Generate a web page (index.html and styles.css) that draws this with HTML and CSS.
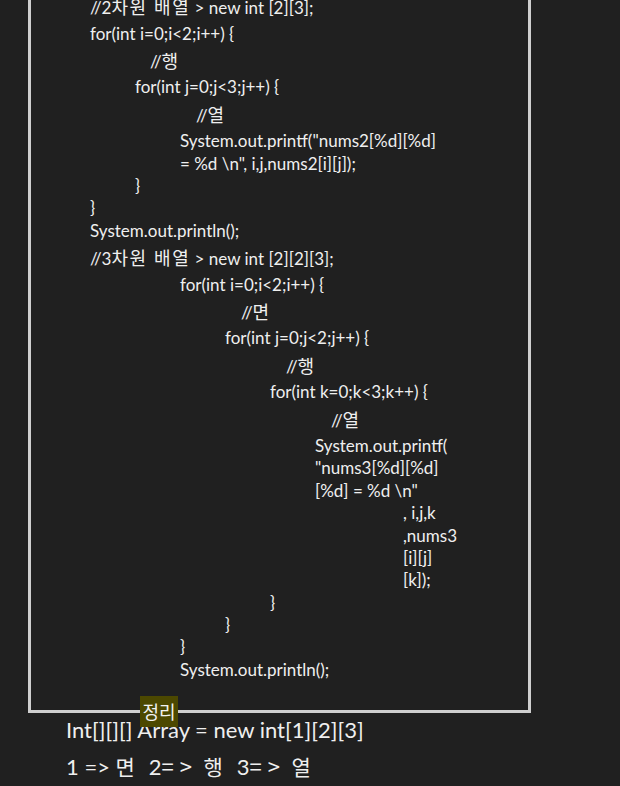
FILE: index.html
```html
<!DOCTYPE html>
<html lang="ko">
<head>
<meta charset="utf-8">
<link rel="stylesheet" href="styles.css">
</head>
<body>
<div class="page">
  <div class="box">
    <div class="ln kl i0">//2<span class="kr">차원 배열</span> &gt; new int [2][3];</div>
    <div class="ln i0">for(int i=0;i&lt;2;i++) {</div>
    <div class="ln kl c1">//<span class="kr">행</span></div>
    <div class="ln i1">for(int j=0;j&lt;3;j++) {</div>
    <div class="ln kl c2">//<span class="kr">열</span></div>
    <div class="ln i2">System.out.printf("nums2[%d][%d]</div>
    <div class="ln i2">= %d \n", i,j,nums2[i][j]);</div>
    <div class="ln i1">}</div>
    <div class="ln i0">}</div>
    <div class="ln i0">System.out.println();</div>
    <div class="ln kl i0">//3<span class="kr">차원 배열</span> &gt; new int [2][2][3];</div>
    <div class="ln i2">for(int i=0;i&lt;2;i++) {</div>
    <div class="ln kl c3">//<span class="kr">면</span></div>
    <div class="ln i3">for(int j=0;j&lt;2;j++) {</div>
    <div class="ln kl c4">//<span class="kr">행</span></div>
    <div class="ln i4">for(int k=0;k&lt;3;k++) {</div>
    <div class="ln kl c5">//<span class="kr">열</span></div>
    <div class="ln i5">System.out.printf(</div>
    <div class="ln i5">"nums3[%d][%d]</div>
    <div class="ln i5">[%d] = %d \n"</div>
    <div class="ln i6">, i,j,k</div>
    <div class="ln i6">,nums3</div>
    <div class="ln i6">[i][j]</div>
    <div class="ln i6">[k]);</div>
    <div class="ln i4">}</div>
    <div class="ln i3">}</div>
    <div class="ln i2">}</div>
    <div class="ln i2">System.out.println();</div>
  </div>
  <div class="notes">
    <span class="tag">정리</span>
    <div class="note n1">Int[][][] Array = new int[1][2][3]</div>
    <div class="note n2">1 =&gt; <span class="kr2 sp">면 </span>2<span class="kr2 op">=&gt;</span> <span class="kr2 sp">행 </span>3<span class="kr2 op">=&gt;</span> <span class="kr2">열</span></div>
  </div>
</div>
</body>
</html>
```

FILE: styles.css
```css
html, body {
  margin: 0;
  padding: 0;
  background: #202020;
}
body {
  width: 620px;
  height: 786px;
  overflow: hidden;
  color: #efefef;
  font-family: "Lato", "Noto Sans CJK KR", sans-serif;
}
.page {
  display: flex;
  flex-direction: column;
}
.box {
  margin-top: -8.7px;
  margin-left: 28px;
  width: 438px;
  border: 3px solid #cfcfcf;
  border-top: none;
  padding: 0 0 29px 59px;
  box-sizing: content-box;
  font-size: 17px;
}
.ln {
  height: 22.4px;
  line-height: 22.4px;
  white-space: pre;
}
.kl {
  height: 31.4px;
  line-height: 31.4px;
}
.kr {
  font-family: "Noto Sans CJK KR", sans-serif;
  font-size: 18px;
  letter-spacing: 1.5px;
}
.c1, .c2, .c3, .c4, .c5 { font-size: 17px; }
.i0 { margin-left: 0; }
.i1 { margin-left: 45px; }
.i2 { margin-left: 90px; }
.i3 { margin-left: 135px; }
.i4 { margin-left: 180px; }
.i5 { margin-left: 225px; }
.i6 { margin-left: 313px; }
.c1 { margin-left: 60px; }
.c2 { margin-left: 106px; }
.c3 { margin-left: 151px; }
.c4 { margin-left: 196px; }
.c5 { margin-left: 241px; }
.notes {
  position: relative;
  padding-left: 66px;
  display: flex;
  flex-direction: column;
}
.tag {
  position: absolute;
  left: 140px;
  top: -17px;
  width: 38px;
  height: 31px;
  background: #4c4800;
  color: #f2f2f2;
  font-family: "Noto Sans CJK KR", sans-serif;
  font-size: 18px;
  line-height: 31px;
  text-align: center;
}
.note {
  font-size: 22px;
  white-space: pre;
}
.n1 {
  margin-top: 1px;
  height: 32px;
  line-height: 32px;
}
.n2 {
  height: 38px;
  line-height: 38px;
}
.kr2 {
  font-family: "Noto Sans CJK KR", sans-serif;
  font-size: 21px;
}
.sp {
  letter-spacing: 4px;
}
.op {
  font-size: 22px;
  letter-spacing: 6px;
}
```
